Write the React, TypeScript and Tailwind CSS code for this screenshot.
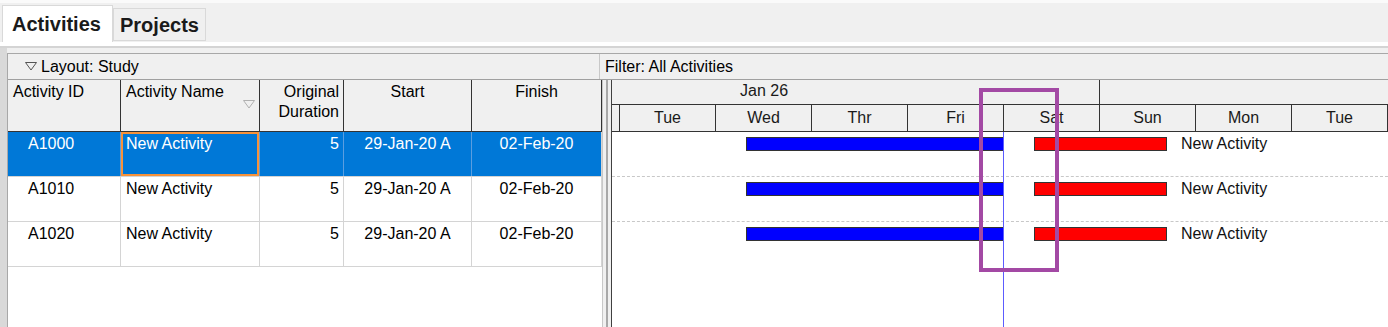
import React from 'react';

type Row = { id: string; name: string; duration: number; start: string; finish: string };

const rows: Row[] = [
  { id: 'A1000', name: 'New Activity', duration: 5, start: '29-Jan-20 A', finish: '02-Feb-20' },
  { id: 'A1010', name: 'New Activity', duration: 5, start: '29-Jan-20 A', finish: '02-Feb-20' },
  { id: 'A1020', name: 'New Activity', duration: 5, start: '29-Jan-20 A', finish: '02-Feb-20' },
];

const days = ['Tue', 'Wed', 'Thr', 'Fri', 'Sat', 'Sun', 'Mon', 'Tue'];

function DownTriangle({ className }: { className?: string }) {
  return (
    <svg width="12" height="9" viewBox="0 0 12 9" className={className}>
      <polygon points="0.5,0.5 11.5,0.5 6,8" fill="none" stroke="currentColor" strokeWidth="1" />
    </svg>
  );
}

function ActivityTable() {
  return (
    <div className="w-[594px] flex flex-col bg-white">
      {/* Column headers */}
      <div className="h-[52px] flex bg-[#f0f0f0] border-b border-[#333]">
        <div className="w-[113px] border-r border-[#333] pl-[5px] pt-[2px] leading-[20px]">Activity ID</div>
        <div className="w-[139px] border-r border-[#333] flex flex-col pt-[2px]">
          <span className="pl-[5px] leading-[20px]">Activity Name</span>
          <DownTriangle className="self-end mr-[4px] mt-[-2px] text-[#b0b0b0]" />
        </div>
        <div className="w-[84px] border-r border-[#333] text-right pr-[4px] pt-[2px] leading-[20px]">
          Original
          <br />
          Duration
        </div>
        <div className="w-[128px] border-r border-[#333] text-center pt-[2px] leading-[20px]">Start</div>
        <div className="w-[130px] border-r border-[#333] text-center pt-[2px] leading-[20px]">Finish</div>
      </div>

      {/* Rows */}
      {rows.map((row, i) => {
        const selected = i === 0;
        const cell = selected ? 'border-r border-[#5a9ee0]' : 'border-r border-[#d4d4d4]';
        return (
          <div
            key={row.id}
            className={`h-[45px] flex leading-[18px] border-b ${
              selected ? 'bg-[#0078d7] text-white border-[#d4d4d4]' : 'bg-white text-black border-[#d4d4d4]'
            }`}
          >
            <div className={`w-[113px] pl-[20px] pt-[3px] ${cell}`}>{row.id}</div>
            <div className={`w-[139px] ${cell}`}>
              <div
                className={`h-full pt-[1px] pl-[3px] ${
                  selected ? 'border-[2px] border-[#f7923a]' : 'pt-[3px] pl-[5px]'
                }`}
              >
                {row.name}
              </div>
            </div>
            <div className={`w-[84px] text-right pr-[4px] pt-[3px] ${cell}`}>{row.duration}</div>
            <div className={`w-[128px] text-center pt-[3px] ${cell}`}>{row.start}</div>
            <div className="w-[130px] text-center pt-[3px] border-r border-[#d4d4d4]">{row.finish}</div>
          </div>
        );
      })}
      <div className="flex-1 bg-white" />
    </div>
  );
}

function Gantt() {
  return (
    <div className="flex-1 relative flex flex-col border-l border-[#404040] bg-white">
      {/* Timescale */}
      <div className="h-[52px] flex flex-col bg-[#f0f0f0] border-b border-[#333] text-[#1a1a1a]">
        <div className="h-[25px] flex border-b border-[#333]">
          <div className="w-[488px] border-r border-[#333] pl-[128px] pt-[1px] leading-[20px]">Jan 26</div>
          <div className="flex-1" />
        </div>
        <div className="h-[26px] flex">
          <div className="w-[8px] border-r border-[#333]" />
          {days.map((d, i) => (
            <div key={i} className="w-[96px] border-r border-[#333] flex items-center justify-center">
              {d}
            </div>
          ))}
        </div>
      </div>

      {/* Bars */}
      <div className="flex-1 relative">
        {rows.map((row, i) => (
          <div
            key={row.id}
            className={`h-[45px] pt-[5px] pl-[134px] ${
              i < rows.length - 1 ? 'border-b border-dashed border-[#c8c8c8]' : ''
            }`}
          >
            <div className="h-[14px] flex items-center">
              <div className="w-[258px] h-[14px] bg-[#0000ff] border border-[#333]" />
              <div className="w-[133px] h-[14px] ml-[30px] bg-[#ff0000] border border-[#333]" />
              <span className="ml-[14px] leading-[18px] text-[#111]">{row.name}</span>
            </div>
          </div>
        ))}
        {/* data date line */}
        <div className="absolute z-10 left-[391px] top-0 bottom-0 w-0 border-l border-[#5c5cff]" />
      </div>

      {/* highlight annotation */}
      <div className="absolute z-20 left-[367px] top-[8px] w-[80px] h-[184px] border-[4px] border-[#a349a4]" />
    </div>
  );
}

export default function App() {
  return (
    <div className="w-[1388px] h-[327px] overflow-hidden flex flex-col bg-[#f0f0f0] text-[16px] text-black font-['Liberation_Sans',Arial,sans-serif]">
      {/* Tabs */}
      <div className="h-[42px] flex items-end border-t-[3px] border-[#fafafa]">
        <div className="ml-[2px] w-[111px] h-[37px] bg-white border border-b-0 border-[#d9d9d9] flex items-center pl-[9px] text-[20px] font-bold text-[#1a1a1a]">
          Activities
        </div>
        <div className="w-[93px] h-[33px] mb-[1px] bg-[#f0f0f0] border border-[#d9d9d9] flex items-center pl-[6px] text-[20px] font-bold text-[#1a1a1a]">
          Projects
        </div>
      </div>
      <div className="h-[4px] bg-white" />
      <div className="h-[2px] bg-[#d4d4d4]" />

      <div className="flex-1 flex">
        <div className="w-[7px] bg-[#d9d9d9]" />
        <div className="flex-1 flex flex-col pt-[5px]">
          <div className="flex-1 flex flex-col border-t border-l border-[#a8a8a8]">
            {/* Layout / filter bar */}
            <div className="h-[26px] flex border-b border-[#a0a0a0] bg-[#f0f0f0]">
              <div className="w-[592px] border-r border-[#c8c8c8] flex items-center pl-[17px]">
                <DownTriangle className="text-[#555]" />
                <span className="ml-[4px]">Layout: Study</span>
              </div>
              <div className="flex-1 flex items-center pl-[5px]">Filter: All Activities</div>
            </div>

            <div className="flex-1 flex">
              <ActivityTable />
              <div className="w-[9px] flex bg-[#f0f0f0] border-l border-[#c8c8c8] pl-[3px]">
                <div className="w-[2px] bg-[#a8a8a8]" />
              </div>
              <Gantt />
            </div>
          </div>
        </div>
      </div>
    </div>
  );
}
